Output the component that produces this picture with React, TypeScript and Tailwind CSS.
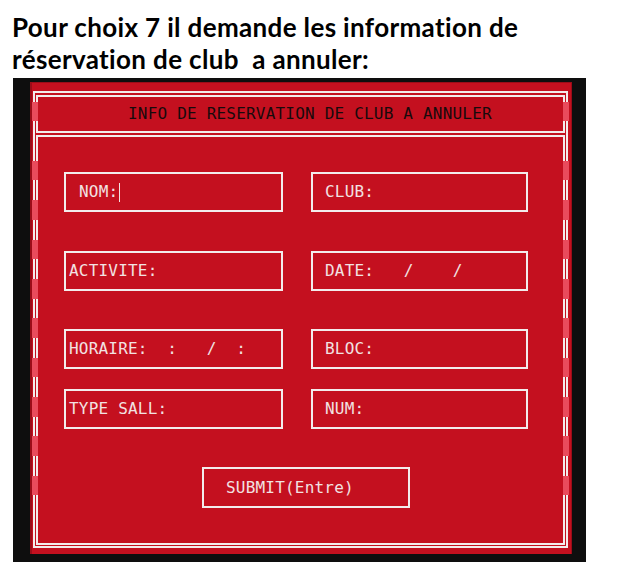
import React from "react";

const pinkRows = [
  false, true, false, false, true, false, true, false, true, false, true, false,
  true, false, true, false, true, false, true, false, true, false, false, false,
];

const mono = { fontFamily: '"DejaVu Sans Mono", "Liberation Mono", monospace' };

function Field({ label, width, pl, cursor }: { label: string; width: string; pl: string; cursor?: boolean }) {
  return (
    <div className={`${width} h-[40px] border-2 border-[#f3ecec] flex items-center ${pl}`}>
      <span className="whitespace-pre text-[16px] leading-[20px] tracking-[0.2px] text-[#f2e2e2]" style={mono}>
        {label}
      </span>
      {cursor && <span className="ml-[1px] w-px h-[19px] bg-[#f2e2e2]" />}
    </div>
  );
}

export default function App() {
  return (
    <div className="w-[617px] h-[582px] bg-white overflow-hidden">
      <div
        className="pl-[12px] pt-[11px] text-[26px] leading-[32px] font-bold text-black tracking-[0.35px]"
        style={{ fontFamily: 'Lato, "Open Sans", sans-serif' }}
      >
        <div>Pour choix 7 il demande les information de</div>
        <div className="whitespace-pre">réservation de club  a annuler:</div>
      </div>
      <div className="ml-[13px] mt-[3px] w-[573px] h-[484px] bg-[#0e0e0e] pl-[17px] pt-[4px]">
        <div className="relative w-[542px] h-[472px] bg-[#c4101f] border-l-2 border-r border-t border-[#9b0c18] flex flex-col pt-[8px] pl-[1px] pr-[3px] pb-[6px]">
          <div className="flex-1 border-2 border-[#f3ecec] flex flex-col gap-[2px] pt-[2px] px-[1px] pb-[1px]">
            <div className="h-[38px] border-2 border-[#f3ecec] pl-[90px] pt-[4px]">
              <span className="whitespace-pre text-[16px] leading-[20px] tracking-[0.2px] text-[#180a0c]" style={mono}>
                INFO DE RESERVATION DE CLUB A ANNULER
              </span>
            </div>
            <div className="flex-1 border-2 border-[#f3ecec] flex flex-col pt-[35px]">
              <div className="flex ml-[26px] gap-[28px]">
                <Field label="NOM:" width="w-[219px]" pl="pl-[13px]" cursor />
                <Field label="CLUB:" width="w-[217px]" pl="pl-[12px]" />
              </div>
              <div className="flex ml-[26px] gap-[28px] mt-[39px]">
                <Field label="ACTIVITE:" width="w-[219px]" pl="pl-[3px]" />
                <Field label="DATE:   /    /" width="w-[217px]" pl="pl-[12px]" />
              </div>
              <div className="flex ml-[26px] gap-[28px] mt-[38px]">
                <Field label="HORAIRE:  :   /  :" width="w-[219px]" pl="pl-[3px]" />
                <Field label="BLOC:" width="w-[217px]" pl="pl-[12px]" />
              </div>
              <div className="flex ml-[26px] gap-[28px] mt-[20px]">
                <Field label="TYPE SALL:" width="w-[219px]" pl="pl-[3px]" />
                <Field label="NUM:" width="w-[217px]" pl="pl-[12px]" />
              </div>
              <div className="ml-[164px] mt-[38px] w-[208px] h-[41px] border-2 border-[#f3ecec] flex items-center pl-[22px]">
                <span className="whitespace-pre text-[16px] leading-[20px] tracking-[0.2px] text-[#f2e2e2]" style={mono}>
                  SUBMIT(Entre)
                </span>
              </div>
            </div>
          </div>
          <div className="absolute left-0 right-0 top-[-1px] flex flex-col pointer-events-none">
            {pinkRows.map((p, i) => (
              <div key={i} className="h-[19.7px] relative">
                {p && <div className="absolute left-0 top-0 bottom-0 w-[6px] bg-[#e94b5c]" />}
                {p && <div className="absolute right-[2px] top-0 bottom-0 w-[6px] bg-[#e94b5c]" />}
              </div>
            ))}
          </div>
        </div>
      </div>
    </div>
  );
}
